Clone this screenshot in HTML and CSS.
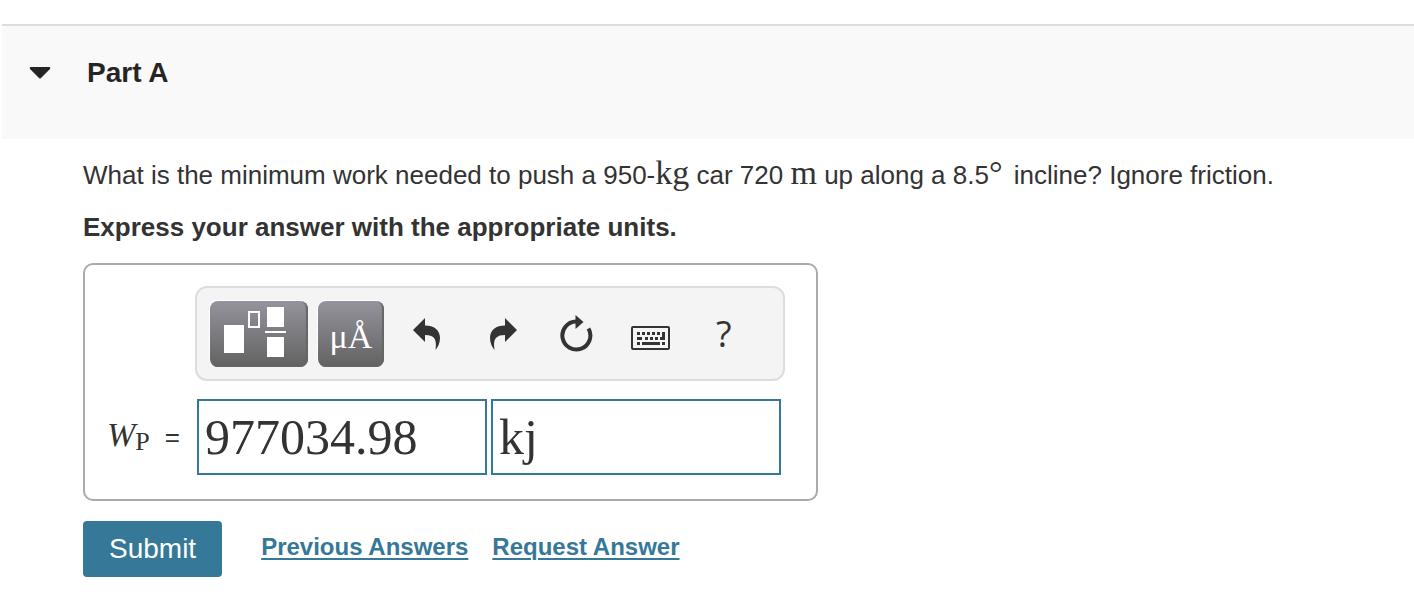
FILE: index.html
```html
<!DOCTYPE html>
<html lang="en">
<head>
<meta charset="utf-8">
<meta name="viewport" content="width=device-width, initial-scale=1">
<title>Part A</title>
<link rel="stylesheet" href="styles.css">
</head>
<body>
<main class="part">
  <header class="part-header">
    <button class="toggle" type="button" aria-label="Collapse Part A" aria-expanded="true">
      <svg width="22" height="12" viewBox="0 0 22 12" aria-hidden="true"><path d="M1.5 0H20.5Q22 .5 21 2L12 11Q11 12 10 11L1 2Q0 .5 1.5 0Z" fill="currentColor"/></svg>
    </button>
    <h1 class="part-title">Part A</h1>
  </header>

  <form class="part-body">
    <p class="question">What is the minimum work needed to push a 950-<span class="unit">kg</span> car 720 <span class="unit">m</span> up along a 8.5<span class="degree">°</span> incline? Ignore friction.</p>
    <p class="instruction">Express your answer with the appropriate units.</p>

    <section class="answer">
      <div class="toolbar" role="toolbar" aria-label="Math tools">
        <button class="tool-dark templates" type="button" aria-label="Templates">
          <svg width="98" height="66" viewBox="0 0 98 66" fill="#fff" aria-hidden="true">
            <path d="M14 24h20v28H14zM57 6h17v20H57zM57 36h17v20H57zM55 30h21v2H55z"/>
            <path d="M39 11h10v15H39z" fill="none" stroke="#fff" stroke-width="2"/>
          </svg>
        </button>
        <button class="tool-dark symbols" type="button" aria-label="Symbols">μÅ</button>
        <button class="tool undo" type="button" aria-label="Undo">
          <svg width="28" height="32" viewBox="0 0 28 32" aria-hidden="true"><path d="M0 12L12 0V7.500C21 7.500 27 12 27 20C27 25 25 29 22.500 32C24 22 22 17 12 17V24Z" fill="currentColor"/></svg>
        </button>
        <button class="tool redo" type="button" aria-label="Redo">
          <svg width="28" height="32" viewBox="0 0 28 32" aria-hidden="true"><path d="M27 12L15 0V7.500C6 7.500 0 12 0 20C0 25 2 29 4.500 32C3 22 5 17 15 17V24Z" fill="currentColor"/></svg>
        </button>
        <button class="tool reset" type="button" aria-label="Reset">
          <svg width="34" height="38" viewBox="0 0 34 38" aria-hidden="true"><path d="M16 6.500A14 14 0 1 0 28.500 13.500" fill="none" stroke="currentColor" stroke-width="4"/><path d="M15.500 0L23.500 7L15.500 14Z" fill="currentColor"/></svg>
        </button>
        <button class="tool keyboard" type="button" aria-label="Keyboard">
          <svg width="40" height="24" viewBox="0 0 40 24" aria-hidden="true"><rect x="1" y="1" width="37" height="22" rx="1" fill="none" stroke="currentColor" stroke-width="2"/><path d="M6 6h3v3H6zM11 6h3v3h-3zM16 6h3v3h-3zM21 6h3v3h-3zM26 6h3v3h-3zM31 6h3v8h-5v-3h2zM6 11h5v3H6zM14 11h3v3h-3zM19 11h3v3h-3zM24 11h3v3h-3zM6 16h3v3H6zM11 16h18v3H11zM31 16h3v3h-3z" fill="currentColor"/></svg>
        </button>
        <button class="tool help" type="button" aria-label="Help">?</button>
      </div>

      <div class="fields">
        <label class="field-label" for="value"><span class="math"><i>W</i><sub>P</sub></span><span>=</span></label>
        <input class="field" id="value" type="text" value="977034.98">
        <input class="field" type="text" value="kj" aria-label="Units">
      </div>
    </section>

    <div class="actions">
      <button class="submit" type="submit">Submit</button>
      <a class="link" href="#previous">Previous Answers</a>
      <a class="link" href="#request">Request Answer</a>
    </div>
  </form>
</main>
<script src="app.js"></script>
</body>
</html>
```
FILE: app.js
```js
document.querySelector(".part-body").addEventListener("submit", function (event) {
  event.preventDefault();
});
```
FILE: styles.css
```css
* {
  box-sizing: border-box;
}

body {
  margin: 0;
  background: #fff;
  color: #333;
  font-family: "Liberation Sans", Arial, sans-serif;
  font-size: 26px;
}

button,
input {
  margin: 0;
  padding: 0;
  color: inherit;
  font: inherit;
}

svg {
  display: block;
}

.part {
  padding: 24px 0 0 2px;
}

.part-header {
  display: flex;
  align-items: center;
  gap: 36px;
  padding: 28px 27px 48px;
  border-top: 2px solid #ddd;
  background: #f9f9f9;
  color: #252525;
}

.toggle,
.tool {
  border: 0;
  background: none;
}

.part-title {
  margin: 0;
  font-size: 28px;
  line-height: 37px;
}

.part-body {
  padding: 16px 40px 28px 81px;
}

.question,
.instruction {
  margin: 0 0 12px;
  line-height: 40px;
}

.instruction {
  margin: 0 0 16px;
  font-weight: bold;
}

.unit,
.math,
.degree {
  font-family: "Liberation Serif", "Times New Roman", serif;
}

.unit {
  font-size: 34px;
  line-height: 32px;
}

.degree {
  margin-right: 4px;
  font-size: 34px;
  line-height: 32px;
}

.answer {
  max-width: 735px;
  padding: 21px 31px 24px 22px;
  border: 2px solid #aaa;
  border-radius: 10px;
}

.toolbar {
  display: flex;
  align-items: center;
  margin-left: 88px;
  padding: 12px 13px;
  height: 95px;
  border: 2px solid #ddd;
  border-radius: 12px;
  background: #f4f4f4;
}

.tool-dark {
  height: 66px;
  border: 0;
  border-radius: 8px;
  background: linear-gradient(#95939d, #626262);
  box-shadow: -1px -1px 0 #fff, inset -2px -1px 1px #666;
  color: #fff;
}

.templates {
  width: 98px;
  margin-right: 10px;
}

.symbols {
  width: 66px;
  padding-top: 6px;
  font-family: "Liberation Serif", "Times New Roman", serif;
  font-size: 34px;
}

.undo {
  margin-left: 29px;
}

.redo {
  margin-left: 49px;
}

.reset {
  margin-left: 42px;
}

.keyboard {
  margin: 8px 0 0 37px;
}

.help {
  margin-left: 45px;
  font-family: "Open Sans", "Noto Sans", sans-serif;
  font-size: 36px;
  line-height: 40px;
}

.fields {
  display: flex;
  align-items: center;
  gap: 4px;
  margin-top: 18px;
  padding-right: 4px;
}

.field-label {
  display: flex;
  align-items: center;
  justify-content: space-between;
  flex: 0 0 86px;
  padding-right: 13px;
}

.math {
  padding-bottom: 4px;
  font-size: 34px;
  line-height: 40px;
}

.math sub {
  font-size: 26px;
  line-height: 24px;
  vertical-align: -4px;
}

.field {
  flex: 1;
  min-width: 0;
  height: 76px;
  padding: 0 6px;
  border: 2px solid #367898;
  background: #fff;
  font-family: "Liberation Serif", "Times New Roman", serif;
  font-size: 50px;
}

.actions {
  display: flex;
  align-items: center;
  gap: 24px;
  margin-top: 20px;
}

.submit {
  height: 56px;
  margin-right: 15px;
  padding: 0 26px;
  border: 0;
  border-radius: 4px;
  background: #367898;
  color: #fff;
  font-size: 28px;
}

.link {
  padding-bottom: 4px;
  color: #367898;
  font-size: 24px;
  font-weight: bold;
  text-decoration-thickness: 2px;
  text-underline-offset: 3px;
}
```
